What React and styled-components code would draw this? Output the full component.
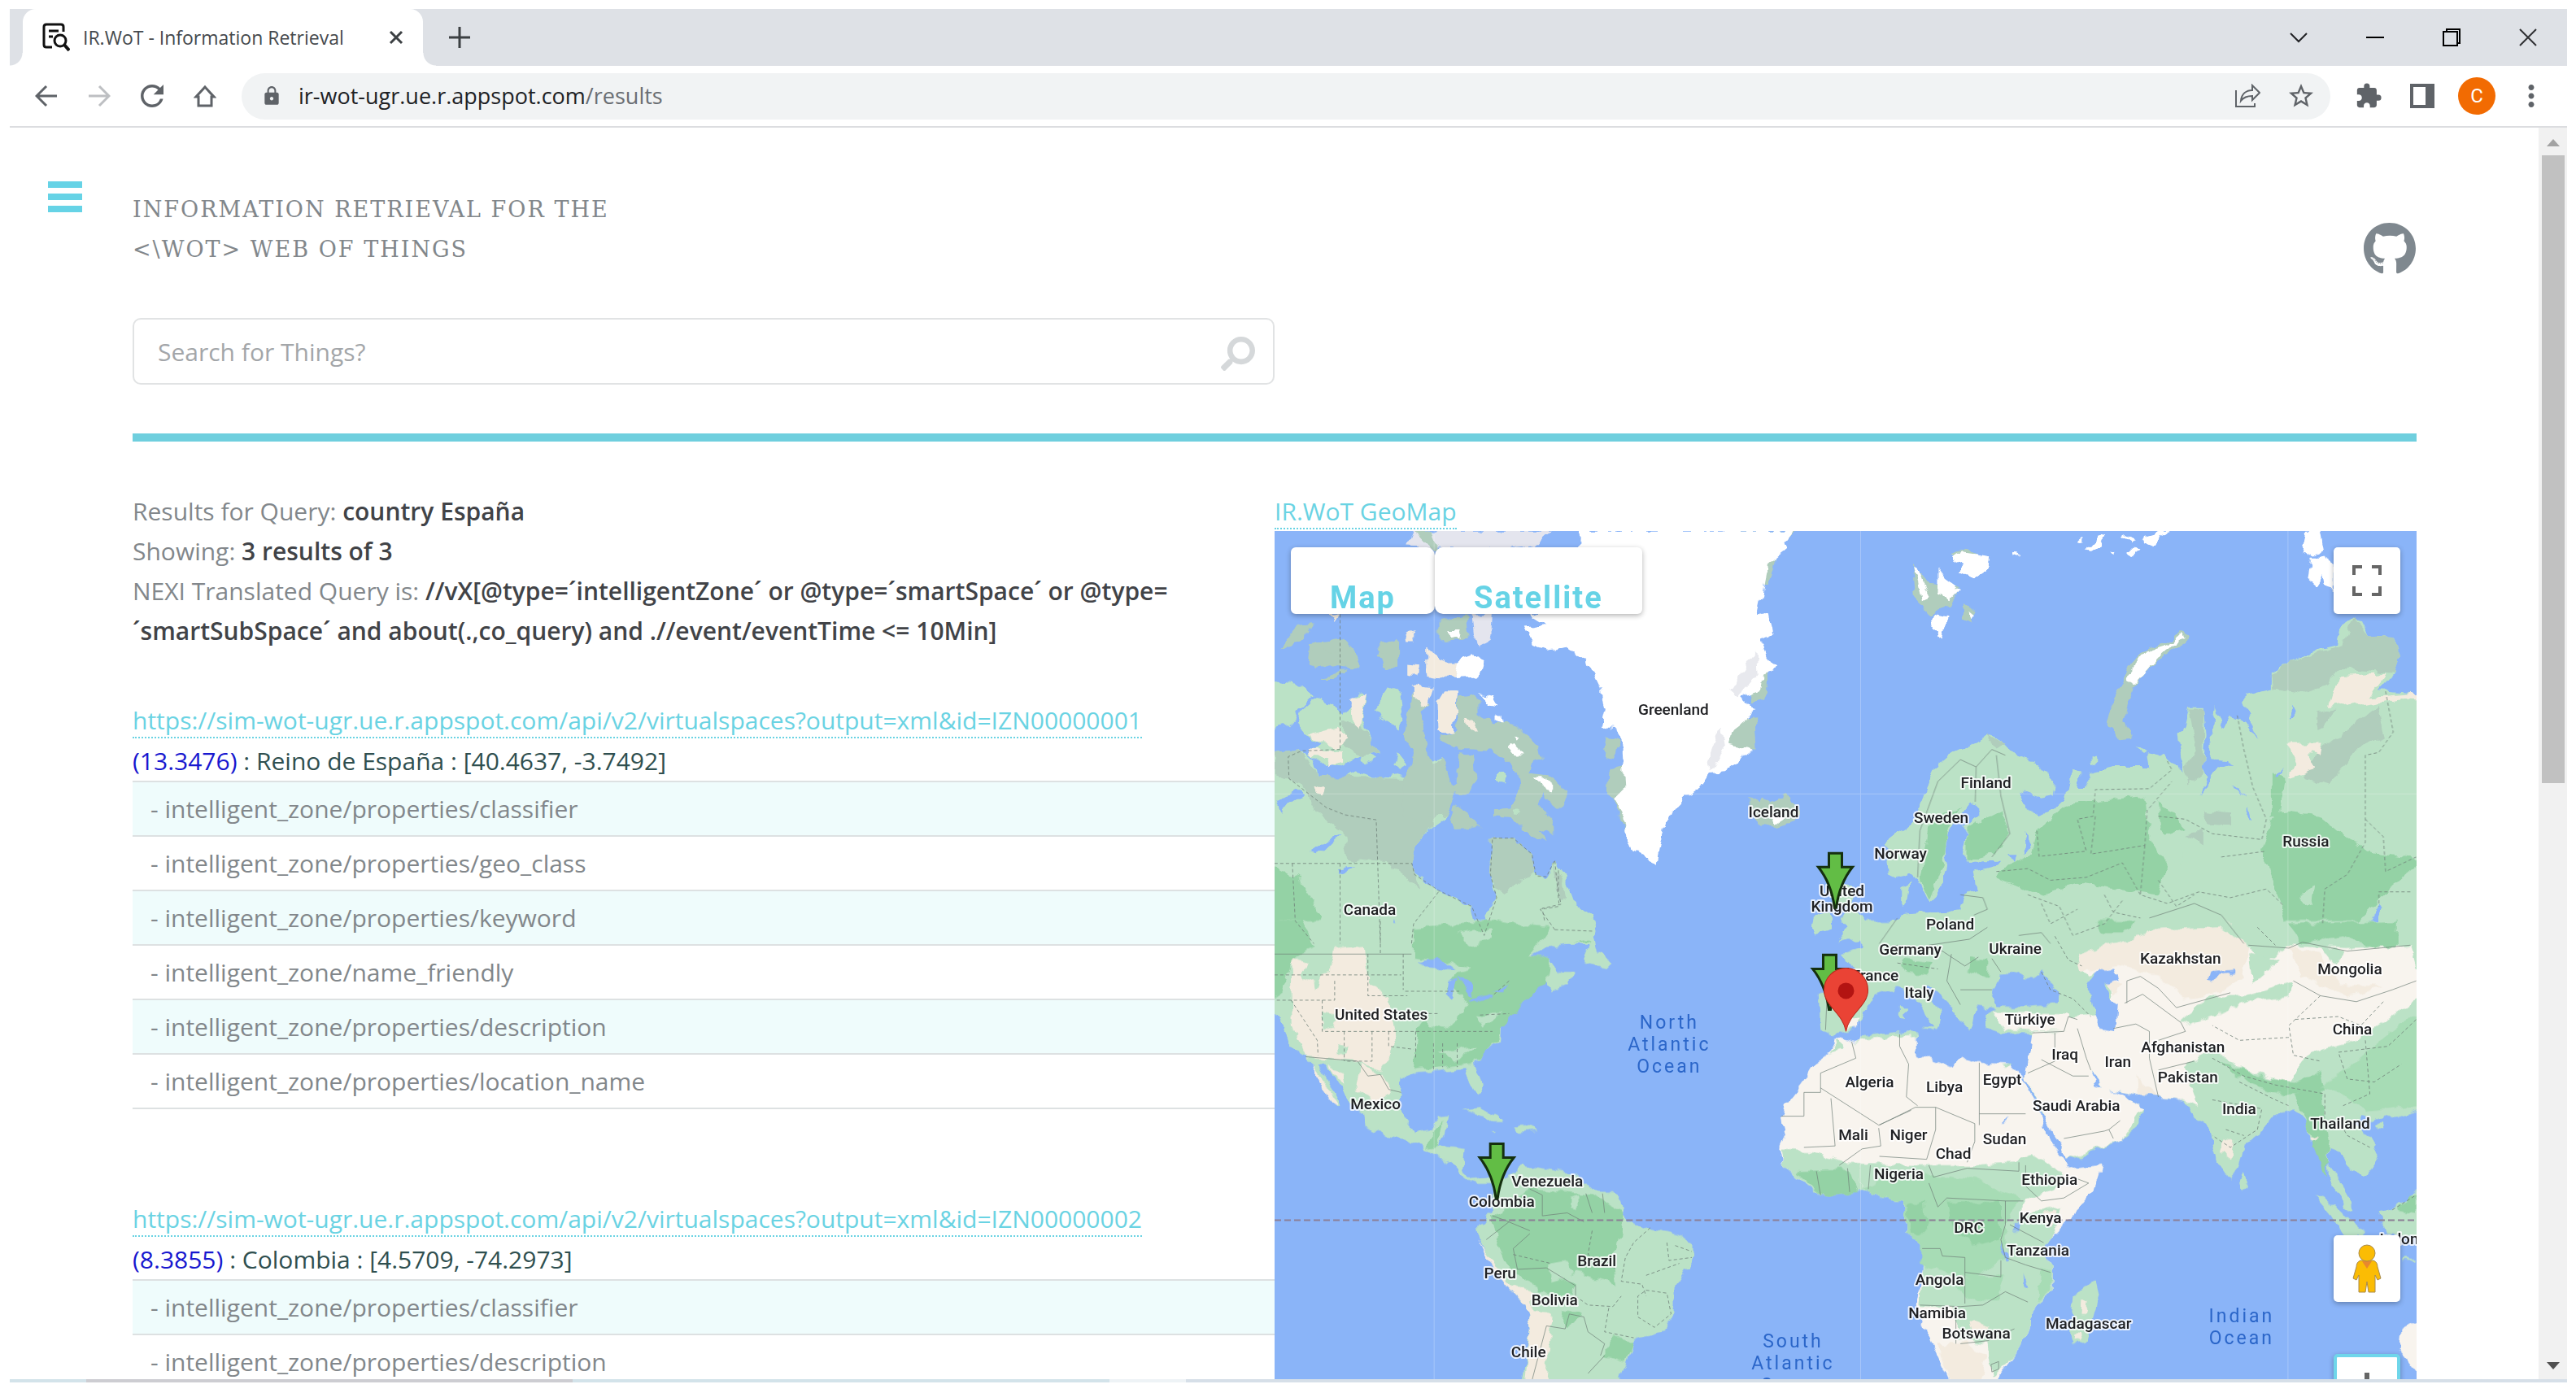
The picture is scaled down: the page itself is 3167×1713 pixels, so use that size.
import { useState } from 'react';
import styled, { createGlobalStyle } from 'styled-components';
import { MdLock, MdExtension, MdStarOutline, MdMoreVert, MdRefresh } from 'react-icons/md';
import { FaGithub, FaSearch } from 'react-icons/fa';

const WATER = '#8ab4f8';
const LIGHT = '#bbe2c6';
const GREEN = '#94d2a5';
const TUNDRA = '#b0cdbc';
const SAND = '#f3ebdf';
const DESERT = '#f8f4ee';
const ICE = '#ffffff';

// each tile keeps its own coordinates, sx / sy bring it back to map pixels
const tiles = [
    {
        id: 'nw', x: -18, y: -53, sx: 1.96, sy: 2.8,
        shapes: [
            ['#e4e5ee', 'M355 200 370 148 700 148 660 200 560 215 420 205Z M510 435 558 435 555 500 560 520 527 548 515 500Z'],
            [TUNDRA, 'M370 148 410 148 430 215 415 215Z M1140 148 1290 148 1250 200 1225 330 1190 330Z M838 1030 842 970 880 960 890 1200 865 1130Z M835 860 865 870 850 930 830 920Z M1190 600 1222 620 1215 720 1180 740Z M1120 800 1195 790 1200 900 1130 900Z'],
            [ICE, 'M770 148 1285 148 1262 190 1268 215 1245 240 1222 270 1215 320 1208 375 1200 430 1225 440 1237 500 1205 520 1222 580 1245 620 1210 640 1205 700 1160 720 1195 770 1140 830 1130 880 1188 900 1150 945 1118 980 1083 985 1055 1045 1020 1065 990 1110 975 1160 965 1210 955 1290 935 1275 900 1250 885 1200 875 1130 850 1070 878 1030 876 970 872 880 858 830 820 820 830 760 815 680 805 650 783 590 740 548 690 556 660 540 640 480 690 470 650 435 760 400Z'],
            ['#e8e9ee', 'M1195 560 1200 640 1150 720 1130 700Z M1110 820 1120 900 1085 975 1080 930Z'],
            [LIGHT, 'M35 910 95 900 130 940 140 990 190 1005 230 975 290 1000 330 985 370 1000 385 950 440 930 445 1000 420 1040 470 1060 450 1130 410 1170 380 1220 366 1290 372 1330 430 1385 505 1440 515 1500 538 1540 550 1520 545 1470 570 1410 552 1330 558 1205 610 1208 635 1250 655 1260 660 1330 690 1340 710 1290 735 1340 755 1420 800 1470 810 1530 800 1575 20 1575 20 910Z'],
            [TUNDRA, 'M35 910 95 900 140 990 370 1000 440 930 470 1060 380 1220 366 1290 380 1370 300 1290 210 1280 200 1180 140 1120 100 1020 35 985Z M558 1205 610 1208 655 1260 660 1330 620 1350 590 1400 570 1380 552 1330Z'],
            [GREEN, 'M20 1290 90 1340 150 1480 140 1575 20 1575Z M370 1568 430 1500 500 1568Z M690 1568 740 1540 800 1568Z'],
            [SAND, 'M195 1530 215 1545 210 1575 185 1575Z M130 1020 155 1035 150 1050 135 1045Z'],
            [WATER, 'M120 1255 160 1215 195 1195 160 1245 135 1260Z M40 1080 90 1040 105 1060 50 1110Z M325 1480 345 1560 320 1500Z M190 1310 230 1305 195 1330Z'],
            [TUNDRA, 'M370 700 405 750 385 770 400 870 405 950 365 1000 370 900 348 850Z M480 910 515 915 520 1010 490 1060 445 1040 475 1020Z M470 1090 500 1120 530 1170 475 1175 460 1150Z'],
            [LIGHT, 'M35 665 100 680 130 715 100 760 70 820 20 835 20 665Z M100 770 135 725 170 740 205 780 240 700 255 720 245 800 270 870 290 910 240 925 190 960 155 950 115 920 150 880 105 850 92 800Z M310 690 340 705 345 770 330 830 290 790 280 760Z M330 915 355 960 340 970 320 950Z M245 905 280 930 265 950 240 940Z M570 985 592 985 590 1020 570 1010Z'],
            [TUNDRA, 'M60 530 90 470 125 465 110 515 50 560Z M120 540 160 530 200 520 240 580 235 620 190 610 160 620 115 600Z M285 540 330 525 330 620 300 610Z M430 460 500 440 505 520 430 530Z M145 655 215 620 180 655Z M200 800 240 810 290 910 240 925 200 890Z'],
            [SAND, 'M445 700 475 700 465 840 430 835 428 740Z M370 680 415 690 400 755 370 720Z M215 735 255 705 240 830 225 810Z M400 545 450 600 480 600 470 655 400 640Z M355 600 380 605 375 645 355 640Z M350 490 370 500 372 530 355 530Z M115 850 190 825 210 860 195 900 140 870Z M115 895 145 900 200 910 200 945 160 960 165 930 120 925Z M165 435 188 435 180 462Z'],
            [ICE, 'M480 590 510 575 540 595 530 650 470 655Z M455 490 485 490 480 520 460 515Z'],
            [TUNDRA, 'M1180 1060 1200 1090 1210 1065 1230 1085 1270 1058 1280 1080 1300 1110 1285 1150 1235 1168 1205 1160 1180 1120Z'],
            [ICE, 'M1225 1130 1265 1135 1240 1158Z'],
            [LIGHT, 'M1335 1470 1375 1460 1375 1520 1340 1535 1330 1500Z M1380 1360 1420 1370 1430 1440 1455 1480 1465 1510 1455 1545 1395 1550 1415 1510 1400 1480 1415 1450 1385 1420Z'],
        ],
        dashed: 'M193 435V900M193 900 100 905 68 925 70 1000 160 1100 205 1125 280 1142 290 1568M35 1292H366L372 1330 430 1385 510 1440 540 1540 570 1410 555 1330 560 1205H610L655 1260 665 1335 690 1338 710 1280 720 1430M193 1292V1568M78 1292 85 1490 130 1568M430 1390 370 1500 365 1568M710 1520 675 1450 720 1440 M710 1520 800 1525',
    },
    {
        id: 'baffin', x: -8, y: -13, sx: 3, sy: 3,
        shapes: [
            [TUNDRA, 'M700 650 740 640 775 660 775 720 830 750 880 745 940 775 1000 830 1010 880 975 890 960 930 1030 940 1110 1000 1085 1060 1065 1060 1010 1010 1000 1050 1050 1110 1050 1160 1000 1140 1030 1190 960 1160 900 1100 830 1095 830 1065 890 1060 930 990 920 930 870 880 820 850 700 845 635 810 640 790 700 770 690 700Z M500 950 550 870 600 870 615 930 640 890 670 980 690 1020 660 1090 500 1100Z'],
            [ICE, 'M780 642 830 650 850 685 815 680Z M835 712 865 712 868 748 835 740Z M885 820 910 830 935 862 905 862 885 840Z M985 945 1010 945 1050 975 1050 1000 1030 995 1010 965Z M905 790 925 800 915 815Z'],
            [SAND, 'M725 728 770 745 780 775 750 775 730 755Z'],
            [LIGHT, 'M905 1060 925 1060 925 1080 905 1078Z M850 930 870 940 868 970 848 968Z M990 1300 960 1400 1000 1350Z'],
            [TUNDRA, 'M150 500 185 455 200 470 245 490 250 520 210 540 165 545Z M440 450 480 440 480 545 440 545Z M415 480 445 490 440 510 400 500Z M1050 1270 1085 1330 1095 1400 1070 1390Z'],
        ],
        dashed: 'M1070 1290 1070 1370 1080 1415 1010 1430 1020 1480',
    },
    {
        id: 'ne', x: 732, y: -53, sx: 1.809, sy: 2.8,
        shapes: [
            [TUNDRA, 'M95 260 130 330 200 340 180 410 125 430 100 380Z M205 400 232 430 225 465 205 450Z M180 230 220 210 240 240 200 250Z'],
            [ICE, 'M180 240 205 222 265 235 262 280 230 312 195 290 210 265Z M95 270 105 270 130 380 115 390 105 320Z M150 270 165 310 200 350 175 390 150 370Z M140 430 170 440 155 520 132 470Z M220 425 232 440 228 455Z M315 225 325 215 330 232 318 236Z M460 185 475 170 475 190Z M480 215 505 170 520 165 510 200 488 222Z M560 155 590 180 580 185 560 165Z M605 190 610 165 650 148 668 148 640 178 628 205Z M570 230 590 200 600 212 580 235Z M532 215 542 215 540 230Z M965 148 1000 148 1008 220 985 235 955 215Z M980 240 1008 240 1029 260 1029 350 1010 340 1005 300 990 335 972 310Z'],
            [TUNDRA, 'M690 490 708 500 703 530 640 595 605 640 585 685 572 740 562 800 580 865 550 868 542 825 525 820 540 730 560 680 573 620 608 560 660 530Z'],
            [ICE, 'M690 500 699 512 642 580 585 675 573 665 575 640 610 565 662 540Z'],
            [LIGHT, 'M-20 1580 20 1510 70 1470 130 1460 200 1450 210 1400 235 1380 230 1320 280 1300 300 1260 330 1240 300 1285 220 1290 205 1260 215 1190 205 1165 240 1130 240 1090 225 1085 195 1140 170 1190 165 1250 170 1300 150 1400 130 1430 105 1350 85 1320 60 1345 40 1330 35 1220 90 1160 110 1100 130 1020 150 950 180 910 230 875 270 850 300 880 330 930 370 950 410 1010 405 1060 380 1068 330 1040 345 1100 375 1130 400 1110 440 1050 450 970 465 975 460 1030 480 1030 490 980 540 960 620 960 615 910 650 925 700 980 690 920 685 850 700 820 710 755 740 755 745 850 740 960 750 1000 735 1060 760 1000 770 955 800 960 795 940 755 935 760 830 765 750 785 830 800 780 830 800 860 870 830 740 835 710 890 690 890 640 930 600 1000 555 1040 540 1050 470 1075 440 1095 460 1105 510 1160 515 1178 580 1165 640 1130 700 1230 710 1230 1580Z M70 1370 90 1350 85 1420 70 1450Z M490 930 502 925 502 950 490 955Z M595 885 615 905 608 912Z'],
            [TUNDRA, 'M890 650 930 600 1050 540 1075 440 1105 510 1160 515 1178 580 1165 640 1040 620 1020 680 960 705 895 690Z M1130 750 1145 860 1080 900 1020 1020 960 990 1000 900 1060 830Z M710 760 740 760 740 980 710 1020 700 960 725 900Z M740 1110 800 1120 800 1165 750 1160Z M990 770 1030 760 1010 830 990 830Z M260 850 305 880 280 900Z M700 1190 740 1180 740 1230Z'],
            [SAND, 'M925 880 1005 880 1000 920 975 910 990 970 930 1000 945 950Z M1040 650 1150 640 1110 720 1230 705 1230 730 1180 725 1100 750 1080 735 1020 750Z M590 1580 620 1540 740 1500 800 1490 830 1580Z M910 1550 970 1530 980 1580 900 1580Z'],
            [GREEN, 'M370 1180 440 1090 610 1060 620 1200 660 1300 640 1400 470 1360 370 1400 280 1340 300 1300 360 1260Z M870 1250 900 1110 1000 1130 1100 1250 1230 1280 1140 1400 1080 1500 980 1568 920 1500 900 1380Z M130 1150 200 1100 170 1180 160 1300 130 1420 110 1350Z M215 1170 290 1110 310 1190 280 1260 215 1280Z M640 1080 700 1170 650 1200Z M890 980 920 1000 910 1120 890 1130Z'],
            [LIGHT, 'M640 1170 700 1240 690 1300 640 1240Z M960 1390 990 1370 985 1430 960 1440Z M1060 1160 1120 1160 1110 1200Z'],
            [WATER, 'M1130 1428 1135 1450 1120 1510 1080 1532 1110 1490Z M340 1180 358 1230 345 1255Z M305 1260 325 1260 315 1290Z M900 1000 915 965 908 1000Z M932 740 942 770 930 795Z M800 1020 835 1060 810 1040Z M840 1100 848 1145 838 1130Z'],
        ],
        lines: 'M105 1340 110 1180 150 1010 200 935 235 960 270 900 300 920M235 960 233 1080M280 920 290 1060 310 1190 270 1270M20 1568 60 1480M200 1400 250 1410 260 1450 230 1470M330 1540 380 1530 400 1568M620 1480 720 1430 780 1470 830 1568',
        dashed: 'M660 940 670 970 620 1035 500 1038 495 1130 460 1140 480 1250 375 1268 370 1180M500 1130 490 1260 610 1230 615 1110 670 1010M610 1230 600 1400M640 1130 700 1140 760 1190 870 1210 880 1140 850 1030 830 900 815 780M780 1270 880 1250M1145 700 1162 840 1130 910 1100 920 1100 1140 1100 1220 1060 1330 1010 1380 1005 1500M1100 1140 1140 1200 1145 1320 1213 1270M1200 1390 1130 1390 1130 1440M280 1320 350 1310 400 1350 480 1340 560 1290 600 1400 660 1430 730 1390 800 1410 880 1380 920 1440M350 1400 420 1440 450 1540 520 1500 560 1420M380 1430 400 1500 460 1450M520 1400 540 1460 600 1480M640 1350 680 1440 720 1400',
    },
    {
        id: 'sw', x: -18, y: 487, sx: 1.96, sy: 2.736,
        shapes: [
            [LIGHT, 'M20 -20 805 -20 800 40 740 60 690 70 655 95 700 110 720 150 760 150 740 190 700 210 690 175 660 200 635 255 600 290 580 340 578 385 540 420 515 460 530 510 535 560 520 565 500 510 490 475 430 485 370 490 340 510 335 580 345 640 370 690 415 680 430 640 455 635 445 700 430 735 495 745 490 820 510 845 545 840 575 850 560 860 525 860 490 840 460 790 420 760 370 725 320 710 250 665 245 625 215 580 180 500 150 455 140 460 195 600 185 605 150 530 130 470 110 430 75 400 50 320 20 250Z M780 100 805 25 815 80 845 120 835 135 780 118Z M490 615 530 610 575 635 590 655 565 655 540 630Z M612 670 650 668 665 683 620 692Z M555 688 570 688 568 694Z'],
            [GREEN, 'M20 -20 100 -20 130 60 80 100 50 220 20 250Z M380 340 480 150 640 90 700 110 690 180 635 255 580 340 570 385 510 460 370 480Z M370 0 560 -20 700 0 660 80 570 210 500 130 370 100Z M415 690 440 650 430 735 400 740Z'],
            [LIGHT, 'M400 230 470 200 500 260 460 340 400 330Z M430 420 520 400 470 450Z M480 20 560 0 560 40 500 60Z M520 300 580 290 540 340Z'],
            [SAND, 'M75 100 115 120 100 180 170 150 180 70 250 60 260 180 310 240 330 390 290 480 230 450 150 440 110 430 80 330Z M240 460 300 500 320 560 280 600 230 540Z M125 465 140 490 190 600 180 600 145 530Z M160 460 200 490 205 530Z'],
            [LIGHT, 'M150 280 190 290 175 340 150 350Z M185 390 215 400 205 430 185 420Z M130 150 150 160 135 210Z'],
            [WATER, 'M380 115 430 105 470 140 400 132Z M455 180 480 170 460 240 450 230Z M480 165 515 190 508 240 495 220Z M500 250 550 225 560 235 510 255Z M555 215 600 195 590 215Z'],
            [LIGHT, 'M560 960 545 975 525 1010 530 1050 560 1130 590 1200 640 1270 650 1350 640 1440 630 1540 860 1540 885 1460 900 1390 975 1355 1000 1280 1000 1200 1045 1110 1045 1070 1010 1040 950 1020 890 990 875 965 870 920 850 890 800 888 760 830 680 810 630 800 610 830 580 850 560 900Z'],
            [GREEN, 'M560 970 650 880 800 900 875 960 870 1040 850 1100 860 1200 760 1160 700 1230 600 1150 570 1050Z M660 1160 760 1200 750 1240 670 1230Z M720 1290 770 1300 740 1350Z M850 1370 900 1390 880 1460 830 1440Z'],
            [LIGHT, 'M700 1130 740 1120 755 1180 700 1200Z M745 910 765 900 765 950 745 945Z'],
            [SAND, 'M525 1050 600 1200 655 1220 655 1290 705 1300 690 1540 635 1540 650 1350 640 1270 590 1200 550 1120Z'],
            [LIGHT, 'M1345 220 1370 220 1480 215 1470 250 1445 310 1430 345 1385 360 1350 345Z M1400 90 1440 70 1490 30 1560 0 1575 0 1575 200 1540 195 1480 225 1410 210 1430 150Z M1395 50 1420 0 1465 0 1455 35Z'],
            [DESERT, 'M1405 320 1440 300 1440 335 1410 345Z M1580 355 1500 365 1430 385 1400 370 1385 380 1370 420 1340 450 1310 520 1270 590 1255 640 1265 700 1250 745 1260 800 1310 860 1580 860Z'],
            [LIGHT, 'M1580 350 1500 358 1430 390 1460 385 1580 368Z M1395 375 1370 425 1400 410Z'],
            [LIGHT, 'M1255 750 1340 755 1400 790 1580 800 1580 1040 1555 910 1520 915 1490 880 1440 890 1360 910 1310 860 1260 800Z'],
            [GREEN, 'M1290 820 1420 815 1440 890 1360 910Z M1480 860 1580 830 1580 900 1520 915Z'],
            [LIGHT, 'M1543 265 1555 265 1553 308 1543 305Z'],
        ],
        lines: 'M35 90H365M110 435 235 450 260 500 290 495 310 545 340 555M560 970 590 985 650 1020M545 1050 600 990M650 1030 610 1080 620 1150 690 1145 760 1205 760 1240M650 880 680 900 680 970M680 970 740 960 780 990M785 895 800 960M825 895 830 960M690 1340 735 1350 745 1300 780 1310 790 1360 830 1400 820 1440M690 1340 655 1524M1425 385 1435 440 1350 490V555H1310V635H1255M1350 540 1490 665 1568 615M1375 575 1385 735 1310 740M1490 675 1495 735 1450 745 1395 800M1340 820 1350 900M1415 810 1420 890M1470 800 1465 880M1365 250 1362 345M830 1440 790 1500',
        dashed: 'M35 160H340M290 -20V90M260 90V230H355M345 90 345 210M180 180V245H35M150 245V350H560M75 245 138 380 140 430M203 350V450M270 350V450H205M310 350 310 400 370 410M350 215H480M365 290H430M375 350 375 440M418 390V480M440 390V470M475 390V470M530 295 600 290M600 180 560 230M940 1010 900 1060 880 1110 870 1190 920 1200 930 1240M800 1020 790 1100 860 1150M610 1100 700 1130M980 1060 985 1120 1040 1110M1000 1070 1040 1090M930 1170 1010 1130M760 1240 790 1270 850 1275 870 1240M930 1220 980 1230 990 1300 950 1345 910 1310 910 1240 930 1220M840 1280 830 1360 900 1380',
    },
    {
        id: 'se', x: 732, y: 487, sx: 1.809, sy: 2.736,
        shapes: [
            [LIGHT, 'M-20 -20 1230 -20 1230 610 1170 640 1145 630 1120 650 1090 640 1075 660 1110 710 1130 760 1120 810 1090 840 1060 800 1045 750 1020 740 1015 790 1050 860 1072 950 1060 955 1020 850 1010 720 980 725 970 660 940 610 900 630 880 670 830 730 820 800 795 850 770 790 748 660 720 640 690 580 600 565 520 545 490 480 500 540 555 570 570 570 605 610 600 660 560 710 470 770 437 780 425 700 380 620 345 510 355 430 360 360 290 355 260 340 262 290 280 275 235 265 230 300 220 350 195 310 185 270 130 190 120 200 150 270 160 310 145 345 110 260 60 200 -20 240Z M68 265 78 265 77 305 68 303Z M115 335 145 335 140 350Z'],
            [DESERT, 'M460 90 640 10 780 0 840 60 870 130 930 60 1060 70 1200 60 1230 230 1130 330 1080 380 980 420 930 520 830 480 760 400 700 470 730 600 690 580 600 565 520 545 490 480 500 530 570 570 605 610 560 710 437 780 345 510 360 350 440 350 440 300 500 290 545 350 530 180 540 140 480 160Z M270 285 440 290 440 350 300 345Z'],
            [SAND, 'M460 90 640 10 780 0 840 60 830 160 780 220 700 240 640 160 560 130 470 150Z M520 180 560 190 540 230Z M930 60 1000 90 1040 190 1140 200 1060 230 960 170Z M590 500 640 570 600 565Z'],
            [GREEN, 'M220 100 260 110 260 170 215 150Z M930 -10 1170 -20 1170 70 1120 70 1050 30 960 50Z M940 560 1000 540 1020 720 1010 840 980 700Z M500 -20 590 -20 560 20 520 20Z M70 110 140 120 130 160 80 150Z'],
            [LIGHT, 'M690 310 760 230 830 230 940 180 930 230 840 250 740 310 710 330Z M840 90 910 110 850 190Z M1000 60 1050 80 1030 120Z'],
            [GREEN, 'M780 450 860 500 940 520 1000 490 1010 550 920 560 840 530Z'],
            [SAND, 'M790 710 810 720 800 780 780 760Z M1000 700 985 725 975 715Z'],
            [WATER, 'M270 220 290 160 330 150 345 185 380 145 415 210 415 260 340 268 280 265Z M480 180 510 140 540 140 550 180 520 190 530 240 550 260 545 350 510 340 495 280Z M755 180 760 150 808 142 810 150 775 158 762 182Z'],
            [DESERT, 'M-20 365 90 350 85 410 110 430 180 470 200 430 240 455 310 460 340 510 375 620 400 720 430 780 440 810 515 800 500 870 460 950 400 1040 385 1090 405 1140 405 1220 360 1300 350 1370 320 1440 270 1540 180 1540 150 1440 110 1310 105 1270 120 1130 110 1060 80 1030 75 920 45 915 -20 880Z'],
            [LIGHT, 'M-20 360 90 350 90 362 -20 375Z M-20 795 100 800 220 800 320 790 360 760 430 830 420 870 340 920 340 960 430 940 400 1040 385 1090 405 1140 405 1220 360 1300 350 1370 320 1440 270 1510 260 1400 200 1390 180 1280 110 1270 120 1130 110 1060 80 1030 75 920 45 915 -20 880Z M290 465 315 455 305 472Z'],
            [SAND, 'M150 1400 210 1400 260 1440 240 1540 180 1540Z M220 1320 270 1340 230 1380Z M380 960 420 950 400 1010Z'],
            ['#a7dcb5', 'M75 920 45 915 -20 880 20 850 130 830 240 850 330 910 300 1000 300 1110 230 1180 110 1140 110 1060 80 1030Z M180 1180 300 1170 280 1260 220 1250Z M380 1150 405 1160 400 1220 370 1270Z M1000 540 1200 300 1230 300 1230 600 1100 620 1050 560Z'],
            [GREEN, 'M170 920 290 925 290 1050 230 1070 180 1000Z M80 940 120 920 125 1030 90 1030Z'],
            [WATER, 'M315 1000 335 1000 332 1022 315 1020Z M292 1060 310 1120 300 1120Z M340 1160 350 1210 342 1215Z M296 655 306 640 302 655Z'],
            [LIGHT, 'M500 1180 508 1230 480 1390 450 1400 440 1370 450 1240Z M820 860 828 828 838 860 835 885 825 885Z M985 900 1010 910 1060 980 1100 1020 1090 1037 1050 1035 1020 960Z M1230 870 1160 950 1130 960 1145 1030 1230 1040Z M1125 665 1140 650 1140 680 1130 685Z M1180 1115 1213 1118 1213 1125 1180 1122Z'],
            [GREEN, 'M1200 900 1213 900 1213 960 1170 950Z'],
            [SAND, 'M470 1260 485 1260 480 1300 468 1300Z M452 1365 468 1370 460 1390 450 1385Z'],
            [DESERT, 'M1230 1320 1180 1360 1175 1420 1190 1450 1230 1530Z'],
        ],
        lines: 'M65 360 65 400 85 460 80 570 105 600M242 455V665M242 627H345M20 665 100 605 145 605 232 660V720L215 790M145 605V680L125 780 20 770M130 800 140 840 215 810 330 820 330 790M130 860 150 940 170 910 300 920 340 920M345 800 345 870 380 920 430 910 485 860 450 840M300 920V1000L290 1050 300 1110 345 1135 400 1160M115 1080H155L160 1105 210 1110V1160L290 1175 290 1120M210 1160 210 1265M110 1270 200 1275 250 1270 300 1225 350 1260M190 1280V1400M200 1400 260 1390 320 1350M268 1470 285 1460 285 1485 270 1495ZM310 1000 385 1060M360 355 430 350 440 300 460 310M410 355 410 450 350 490M380 445 450 500 485 500M460 340 480 440 490 480M430 710 520 685 530 680M530 680 540 710M555 650 530 680M565 255 605 225 690 320 700 350 640 380M540 340 590 325 620 350 620 440 640 570M640 480 720 450M570 180V255M570 180 600 165 640 205 680 270 800 220M840 60 930 70 960 50 1060 80 1200 60M940 180 1000 230 1080 250 1160 210 1213 180M180 90 170 180 200 260M240 100 210 130 160 80 60 60 20 80M270 105 290 150M200 210 270 210M260 0 220 40 130 60',
        dashed: 'M410 30 440 110 470 130M380 150 400 210 450 240 490 300M60 120 150 140M930 370 820 380 760 330M1000 230 930 330 940 430 1000 450M1140 250 1090 330 1040 300 940 310M1213 310 1150 400 1040 420 1060 510 1120 520 1180 460M1100 380 1110 560 1050 600M760 440 830 500 900 530 1010 560 1010 640M760 580 870 610 860 680 800 740 760 700M790 680 830 700M820 520 900 580 930 600M1040 650 1060 700 1110 740M860 0 900 60M1160 950 1213 900',
    },
];

const countries = [
    ['Greenland', 490, 219], ['Iceland', 613, 345], ['United', 697, 442], ['Kingdom', 697, 461],
    ['Canada', 117, 465], ['Norway', 769, 396], ['Finland', 874, 309], ['Sweden', 819, 352],
    ['Poland', 830, 483], ['Russia', 1267, 381], ['Ukraine', 910, 513], ['Germany', 781, 514],
    ['Kazakhstan', 1113, 525], ['Mongolia', 1321, 538], ['Italy', 792, 567], ['France', 738, 546],
    ['Türkiye', 928, 600], ['China', 1324, 612], ['Iraq', 971, 643], ['Iran', 1036, 652],
    ['Afghanistan', 1116, 634], ['Pakistan', 1122, 671], ['Egypt', 894, 674], ['Libya', 823, 683],
    ['Saudi Arabia', 985, 706], ['India', 1185, 710], ['Thailand', 1309, 728], ['Niger', 779, 742],
    ['Mali', 711, 742], ['Algeria', 731, 677], ['Sudan', 897, 747], ['Chad', 834, 765],
    ['Nigeria', 767, 790], ['Ethiopia', 952, 797], ['Kenya', 941, 844], ['DRC', 853, 856],
    ['Tanzania', 938, 884], ['Angola', 817, 920], ['Namibia', 814, 961], ['Botswana', 862, 986],
    ['Madagascar', 1000, 974], ['Indonesia', 1399, 870], ['United States', 131, 594], ['Mexico', 124, 704],
    ['Venezuela', 335, 799], ['Colombia', 279, 824], ['Brazil', 396, 897], ['Peru', 277, 912],
    ['Bolivia', 344, 945], ['Chile', 312, 1009],
];

const oceans = [
    ['North', 485, 604], ['Atlantic', 485, 631], ['Ocean', 485, 658],
    ['South', 637, 996], ['Atlantic', 637, 1023], ['Ocean', 637, 1050],
    ['Indian', 1188, 965], ['Ocean', 1188, 992],
];

const arrows = [[689, 395], [682, 520], [273, 752]];

const results = [
    {
        url: 'https://sim-wot-ugr.ue.r.appspot.com/api/v2/virtualspaces?output=xml&id=IZN00000001',
        score: '(13.3476)',
        place: 'Reino de España : [40.4637, -3.7492]',
        props: ['properties/classifier', 'properties/geo_class', 'properties/keyword', 'name_friendly', 'properties/description', 'properties/location_name'],
    },
    {
        url: 'https://sim-wot-ugr.ue.r.appspot.com/api/v2/virtualspaces?output=xml&id=IZN00000002',
        score: '(8.3855)',
        place: 'Colombia : [4.5709, -74.2973]',
        props: ['properties/classifier', 'properties/description'],
    },
];

const WorldMap = () => (
    <MapSvg viewBox="0 0 1403 1100" preserveAspectRatio="xMinYMin slice" role="img" aria-label="World map">
        <defs>
            <filter id="coast" x="0" y="0" width="1403" height="1100" filterUnits="userSpaceOnUse">
                <feTurbulence type="fractalNoise" baseFrequency="0.07" numOctaves="2" seed="4" result="noise" />
                <feDisplacementMap in="SourceGraphic" in2="noise" scale="12" xChannelSelector="R" yChannelSelector="G" />
            </filter>
        </defs>
        <rect width="1403" height="1100" fill={WATER} />
        <g filter="url(#coast)">
            {tiles.map(t => (
                <g key={t.id} transform={`translate(${t.x} ${t.y}) scale(${1 / t.sx} ${1 / t.sy})`}>
                    {t.shapes.map(([fill, d], i) => <path key={i} fill={fill} d={d} />)}
                </g>
            ))}
        </g>
        {tiles.map(t => (
            <g key={t.id} transform={`translate(${t.x} ${t.y}) scale(${1 / t.sx} ${1 / t.sy})`} fill="none" stroke="#6f7f78">
                {t.lines && <path d={t.lines} vectorEffect="non-scaling-stroke" strokeOpacity="0.7" />}
                <path d={t.dashed} vectorEffect="non-scaling-stroke" strokeDasharray="4 3" strokeOpacity="0.8" />
            </g>
        ))}
        <path d="M196 0V1050M720 0V1050M1245 0V1050M0 323H1403" stroke="#ffffff" strokeOpacity="0.25" fill="none" />
        <path d="M0 847H1403" stroke="#8c7f95" strokeWidth="2" strokeDasharray="8 4" />
        {countries.map(([name, x, y]) => <Country key={name} x={x} y={y}>{name}</Country>)}
        {oceans.map(([name, x, y]) => <Ocean key={`${name}${x}${y}`} x={x} y={y}>{name}</Ocean>)}
        {arrows.map(([x, y]) => (
            <path
                key={x}
                transform={`translate(${x} ${y})`}
                d="M-8 1H8V18H21Q5 38 1 68H-1Q-5 38 -21 18H-8Z"
                fill="#62bd45"
                stroke="#15300f"
                strokeWidth="3"
            />
        ))}
        <path d="M702 615C698 592 675 584 675 564A27 27 0 0 1 729 564C729 584 706 592 702 615Z" fill="#ea4335" stroke="#b8281c" strokeWidth="1" />
        <circle cx="702" cy="565" r="10" fill="#b31412" />
    </MapSvg>
);

const App = () => {
    const [query, setQuery] = useState('');

    return (
        <>
            <GlobalStyle />
            <Window>
                <TabStrip>
                    <Tab>
                        <svg width="34" height="36" viewBox="0 0 34 36" fill="none" stroke="#111" strokeWidth="3">
                            <path d="M26 11V5Q26 2 23 2H5Q2 2 2 5V27Q2 30 5 30H12M8 10H20M8 17H13" />
                            <circle cx="22" cy="22" r="7" />
                            <path d="M27 27 33 34" strokeWidth="4" />
                        </svg>
                        <TabTitle>IR.WoT - Information Retrieval</TabTitle>
                        <IconButton aria-label="Close tab" $w={18}>
                            <svg width="18" height="18" viewBox="0 0 18 18" stroke="#3c4043" strokeWidth="3"><path d="M2 2 16 16M16 2 2 16" /></svg>
                        </IconButton>
                    </Tab>
                    <IconButton aria-label="New tab" $w={26}>
                        <svg width="26" height="26" viewBox="0 0 26 26" stroke="#3c4043" strokeWidth="3"><path d="M13 0V26M0 13H26" /></svg>
                    </IconButton>
                    <WindowButtons>
                        <IconButton aria-label="Search tabs" $w={24}>
                            <svg width="24" height="24" viewBox="0 0 24 24" fill="none" stroke="#202124" strokeWidth="2"><path d="M2 7 12 17 22 7" /></svg>
                        </IconButton>
                        <IconButton aria-label="Minimize" $w={24}>
                            <svg width="24" height="24" viewBox="0 0 24 24" stroke="#000" strokeWidth="2"><path d="M1 12H23" /></svg>
                        </IconButton>
                        <IconButton aria-label="Restore" $w={24}>
                            <svg width="24" height="24" viewBox="0 0 24 24" fill="none" stroke="#000" strokeWidth="2"><path d="M2 5H19V22H2ZM6 5V2H22V19H19" /></svg>
                        </IconButton>
                        <IconButton aria-label="Close" $w={24}>
                            <svg width="24" height="24" viewBox="0 0 24 24" stroke="#303134" strokeWidth="2"><path d="M2 2 22 22M22 2 2 22" /></svg>
                        </IconButton>
                    </WindowButtons>
                </TabStrip>

                <Toolbar>
                    <ToolGroup $gap={37}>
                        <IconButton aria-label="Back" $w={28}>
                            <svg width="28" height="28" viewBox="0 0 28 28" fill="none" stroke="#5f6368" strokeWidth="3"><path d="M27 14H3M14 2 2 14 14 26" /></svg>
                        </IconButton>
                        <IconButton aria-label="Forward" $w={28}>
                            <svg width="28" height="28" viewBox="0 0 28 28" fill="none" stroke="#bdbfc2" strokeWidth="3"><path d="M1 14H25M14 2 26 14 14 26" /></svg>
                        </IconButton>
                        <IconButton aria-label="Reload" $w={28}><MdRefresh size={42} /></IconButton>
                        <IconButton aria-label="Home" $w={28}>
                            <svg width="28" height="28" viewBox="0 0 28 28" fill="none" stroke="#5f6368" strokeWidth="3"><path d="M14 3 3 15H6V26H22V15H25Z" /></svg>
                        </IconButton>
                    </ToolGroup>
                    <AddressBar>
                        <MdLock size={26} color="#5f6368" />
                        <Url><b>ir-wot-ugr.ue.r.appspot.com</b>/results</Url>
                        <ToolGroup $gap={34}>
                            <IconButton aria-label="Share" $w={32}>
                                <svg width="32" height="30" viewBox="0 0 32 30" fill="none" stroke="#5f6368" strokeWidth="2"><path d="M2 8V28H25V24M8 21C9 12 15 8 22 8V2L31 11 22 20V15C15 15 11 17 8 21Z" /></svg>
                            </IconButton>
                            <IconButton aria-label="Bookmark" $w={32}><MdStarOutline size={36} /></IconButton>
                        </ToolGroup>
                    </AddressBar>
                    <ToolGroup $gap={34}>
                        <IconButton aria-label="Extensions" $w={32}><MdExtension size={34} /></IconButton>
                        <IconButton aria-label="Side panel" $w={32}>
                            <svg width="30" height="30" viewBox="0 0 30 30"><path d="M0 0H30V30H0ZM4 4V26H19V4Z" fill="#5f6368" fillRule="evenodd" /></svg>
                        </IconButton>
                        <Avatar>C</Avatar>
                        <IconButton aria-label="Menu" $w={32}><MdMoreVert size={42} /></IconButton>
                    </ToolGroup>
                </Toolbar>

                <Page>
                    <Side>
                        <MenuButton aria-label="Toggle menu"><span /><span /><span /></MenuButton>
                    </Side>
                    <Main>
                        <Header>
                            <SiteTitle>Information retrieval for the<br />&lt;\WoT&gt; Web of Things</SiteTitle>
                            <a href="#github" aria-label="GitHub"><FaGithub size={66} color="#7f888f" /></a>
                        </Header>
                        <SearchBox onSubmit={e => e.preventDefault()}>
                            <input
                                type="text"
                                aria-label="Search for Things"
                                placeholder="Search for Things?"
                                value={query}
                                onChange={e => setQuery(e.target.value)}
                            />
                            <SearchButton aria-label="Search" $w={42}><FaSearch size={42} color="#d5d8da" /></SearchButton>
                        </SearchBox>
                        <Rule />
                        <Columns>
                            <section>
                                <Summary>
                                    Results for Query: <strong>country España</strong><br />
                                    Showing: <strong>3 results of 3</strong><br />
                                    NEXI Translated Query is: <strong>//vX[@type=´intelligentZone´ or @type=´smartSpace´ or @type=<br />´smartSubSpace´ and about(.,co_query) and .//event/eventTime &lt;= 10Min]</strong>
                                </Summary>
                                {results.map(r => (
                                    <Result key={r.url}>
                                        <ResultHead>
                                            <Link href={r.url}>{r.url}</Link>
                                        </ResultHead>
                                        <Place><span>{r.score}</span> : {r.place}</Place>
                                        <Properties>
                                            <tbody>
                                                {r.props.map(p => <tr key={p}><td>- intelligent_zone/{p}</td></tr>)}
                                            </tbody>
                                        </Properties>
                                    </Result>
                                ))}
                            </section>
                            <section>
                                <MapHead><Link href="#geomap">IR.WoT GeoMap</Link></MapHead>
                                <MapBox>
                                    <WorldMap />
                                    <MapTypes>
                                        <MapType>Map</MapType>
                                        <MapType>Satellite</MapType>
                                    </MapTypes>
                                    <MapControls>
                                        <MapControl aria-label="Toggle fullscreen view">
                                            <svg width="36" height="38" viewBox="0 0 36 38" fill="none" stroke="#666" strokeWidth="4"><path d="M2 12V2H12M24 2H34V12M34 26V36H24M12 36H2V26" /></svg>
                                        </MapControl>
                                        <MapControl aria-label="Street View" $push>
                                            <svg width="36" height="60" viewBox="0 0 36 60" fill="#fbbc04" stroke="#a98a4b" strokeWidth="1">
                                                <path d="M10 20H26Q31 22 31 28L35 42 31 44 28 38V59H20L18 46 16 59H8V38L5 44 1 42 5 28Q5 22 10 20Z" />
                                                <path d="M12 21H24L18 30Z" fill="#e8882e" stroke="none" />
                                                <circle cx="18" cy="11" r="10" />
                                            </svg>
                                        </MapControl>
                                        <MapControl aria-label="Zoom in" $gap $focus>
                                            <svg width="36" height="36" viewBox="0 0 36 36" stroke="#666" strokeWidth="6"><path d="M18 0V36M0 18H36" /></svg>
                                        </MapControl>
                                    </MapControls>
                                </MapBox>
                            </section>
                        </Columns>
                    </Main>
                    <Scrollbar>
                        <svg width="16" height="9" viewBox="0 0 16 9"><path d="M0 9 8 0 16 9Z" fill="#a3a3a3" /></svg>
                        <Thumb />
                        <svg width="16" height="9" viewBox="0 0 16 9"><path d="M0 0 8 9 16 0Z" fill="#505050" /></svg>
                    </Scrollbar>
                </Page>
                <StatusEdge />
            </Window>
        </>
    );
};

const GlobalStyle = createGlobalStyle`
  * { box-sizing: border-box; }
  body {
    margin: 0;
    background: #fff;
    color: #82878b;
    font-family: "Open Sans", sans-serif;
    font-size: 30px;
    line-height: 49px;
  }
  button { font: inherit; border: 0; background: none; padding: 0; cursor: pointer; }
`;

const Window = styled.div`
  display: flex;
  flex-direction: column;
  height: 100vh;
  padding: 11px 11px 13px 12px;
  overflow: hidden;
`;

const IconButton = styled.button`
  display: flex;
  align-items: center;
  justify-content: center;
  flex: none;
  width: ${p => p.$w}px;
  color: #5f6368;

  svg { flex: none; }
`;

const TabStrip = styled.div`
  display: flex;
  align-items: center;
  gap: 32px;
  height: 70px;
  flex: none;
  padding: 0 36px 0 16px;
  background: #dee1e6;
`;

const Tab = styled.div`
  position: relative;
  display: flex;
  align-items: center;
  width: 492px;
  height: 100%;
  padding: 0 24px;
  border-radius: 16px 16px 0 0;
  background: #fff;

  &::before, &::after {
    content: "";
    position: absolute;
    bottom: 0;
    width: 16px;
    height: 16px;
  }
  &::before {
    right: 100%;
    background: radial-gradient(circle at 0 0, transparent 15px, #fff 16px);
  }
  &::after {
    left: 100%;
    background: radial-gradient(circle at 100% 0, transparent 15px, #fff 16px);
  }
`;

const TabTitle = styled.span`
  flex: 1;
  padding-left: 16px;
  font-size: 23px;
  line-height: 32px;
  color: #45494d;
  white-space: nowrap;
`;

const WindowButtons = styled.div`
  display: flex;
  gap: 70px;
  margin-left: auto;
`;

const Toolbar = styled.div`
  display: flex;
  align-items: center;
  gap: 31px;
  height: 76px;
  flex: none;
  padding: 0 28px 0 31px;
  border-bottom: 2px solid #dcdde0;
`;

const ToolGroup = styled.div`
  display: flex;
  align-items: center;
  gap: ${p => p.$gap}px;
`;

const AddressBar = styled.div`
  display: flex;
  align-items: center;
  gap: 20px;
  flex: 1;
  height: 57px;
  padding: 0 20px 0 24px;
  border-radius: 29px;
  background: #f1f3f4;
`;

const Url = styled.span`
  flex: 1;
  font-size: 27px;
  line-height: 36px;
  color: #6a6e73;

  b { font-weight: 400; color: #202124; }
`;

const Avatar = styled.button`
  width: 46px;
  height: 46px;
  margin: 0 -6px;
  border-radius: 50%;
  background: #f26b02;
  color: #fff;
  font-family: Roboto, sans-serif;
  font-size: 24px;
  line-height: 46px;
`;

const Page = styled.div`
  display: flex;
  flex: 1;
  min-height: 0;
  overflow: hidden;
`;

const Side = styled.aside`
  flex: none;
  width: 151px;
  padding: 66px 0 0 47px;
`;

const MenuButton = styled.button`
  display: flex;
  flex-direction: column;
  gap: 7px;
  width: 42px;

  span { width: 100%; height: 8px; background: #66d3e6; }
`;

const Main = styled.main`
  flex: 1;
  min-width: 0;
  padding: 76px 150px 0 0;
`;

const Header = styled.header`
  display: flex;
  justify-content: space-between;
  align-items: flex-end;
  height: 106px;

  a { display: flex; }
`;

const SiteTitle = styled.h1`
  align-self: flex-start;
  margin: 0;
  font-family: "DejaVu Serif", serif;
  font-size: 27px;
  font-weight: 400;
  line-height: 49px;
  letter-spacing: 2px;
  text-transform: uppercase;
`;

const SearchBox = styled.form`
  display: flex;
  align-items: center;
  width: 50%;
  height: 82px;
  margin-top: 52px;
  padding: 0 22px 0 29px;
  border: 2px solid #e1e3e4;
  border-radius: 10px;

  input {
    flex: 1;
    border: 0;
    outline: 0;
    padding: 0;
    background: none;
    font: inherit;
    color: #7f888f;
  }
  input::placeholder { color: #a3a6a9; opacity: 1; }
`;

const SearchButton = styled(IconButton)`
  padding-top: 6px;

  svg { transform: scaleX(-1); }
`;

const Rule = styled.hr`
  height: 10px;
  margin: 60px 0 61px;
  border: 0;
  background: #6fcfde;
`;

const Columns = styled.div`
  display: grid;
  grid-template-columns: 1fr 1fr;

  section { min-width: 0; }
`;

const Summary = styled.p`
  margin: 0 0 61px;
  white-space: nowrap;

  strong { font-weight: 600; color: #414347; }
`;

const Link = styled.a`
  color: #6ad3e3;
  text-decoration: none;
  border-bottom: 2px dotted #6ad3e3;
`;

const Result = styled.article`
  margin-bottom: 110px;
`;

const ResultHead = styled.div`
  height: 50px;
`;

const Place = styled.div`
  color: #2f4f4f;

  span { color: #1717cf; }
`;

const Properties = styled.table`
  width: 100%;
  border-collapse: collapse;

  tr { height: 67px; border: solid #dde1e2; border-width: 2px 0; }
  tr:nth-child(odd) { background: #effcfc; }
  td { padding: 0 22px; }
`;

const MapHead = styled.div`
  height: 49px;
`;

const MapBox = styled.div`
  position: relative;
  height: 1100px;
  overflow: hidden;
  background: ${WATER};
`;

const MapSvg = styled.svg`
  display: block;
  width: 100%;
  height: 100%;
`;

const Country = styled.text`
  font: 500 19px Roboto, sans-serif;
  fill: #202124;
  stroke: #fff;
  stroke-width: 4px;
  stroke-opacity: 0.8;
  stroke-linejoin: round;
  paint-order: stroke;
  text-anchor: middle;
  dominant-baseline: central;
`;

const Ocean = styled.text`
  font: 400 23px Roboto, sans-serif;
  letter-spacing: 3px;
  fill: #2b66c9;
  text-anchor: middle;
  dominant-baseline: central;
`;

const MapTypes = styled.div`
  position: absolute;
  top: 20px;
  left: 20px;
  display: flex;
`;

const MapType = styled.button`
  height: 82px;
  padding: 42px 48px 0;
  border-radius: 6px 10px 10px 6px;
  background: #fff;
  box-shadow: 0 2px 6px rgba(0, 0, 0, 0.3);
  overflow: hidden;
  color: #66d3e6;
  font-family: Roboto, sans-serif;
  font-size: 38px;
  font-weight: 700;
  line-height: 38px;
  letter-spacing: 2px;

  & + & { border-radius: 10px 6px 6px 10px; }
`;

const MapControls = styled.div`
  position: absolute;
  top: 20px;
  right: 20px;
  display: flex;
  flex-direction: column;
`;

const MapControl = styled.button`
  display: flex;
  align-items: center;
  justify-content: center;
  width: 82px;
  height: 82px;
  margin-top: ${p => (p.$push ? 764 : p.$gap ? 64 : 0)}px;
  border: ${p => (p.$focus ? '4px solid #6fd6ea' : '0')};
  border-radius: 5px;
  background: #fff;
  box-shadow: 0 2px 6px rgba(0, 0, 0, 0.3);
`;

const Scrollbar = styled.div`
  display: flex;
  flex-direction: column;
  align-items: center;
  flex: none;
  width: 35px;
  padding: 14px 0 12px;
  background: #f1f1f1;

  svg:last-child { margin-top: auto; }
`;

const Thumb = styled.div`
  width: 28px;
  height: 51%;
  margin-top: 11px;
  background: #c1c1c1;
`;

const StatusEdge = styled.div`
  flex: none;
  height: 4px;
  background: linear-gradient(90deg, #d3e3ea 3%, #cdcdd2 3% 22%, #d3e3ea 22% 43%, #eef3f6 43% 46%, #d6dfe8 46%);
`;

export default App;
